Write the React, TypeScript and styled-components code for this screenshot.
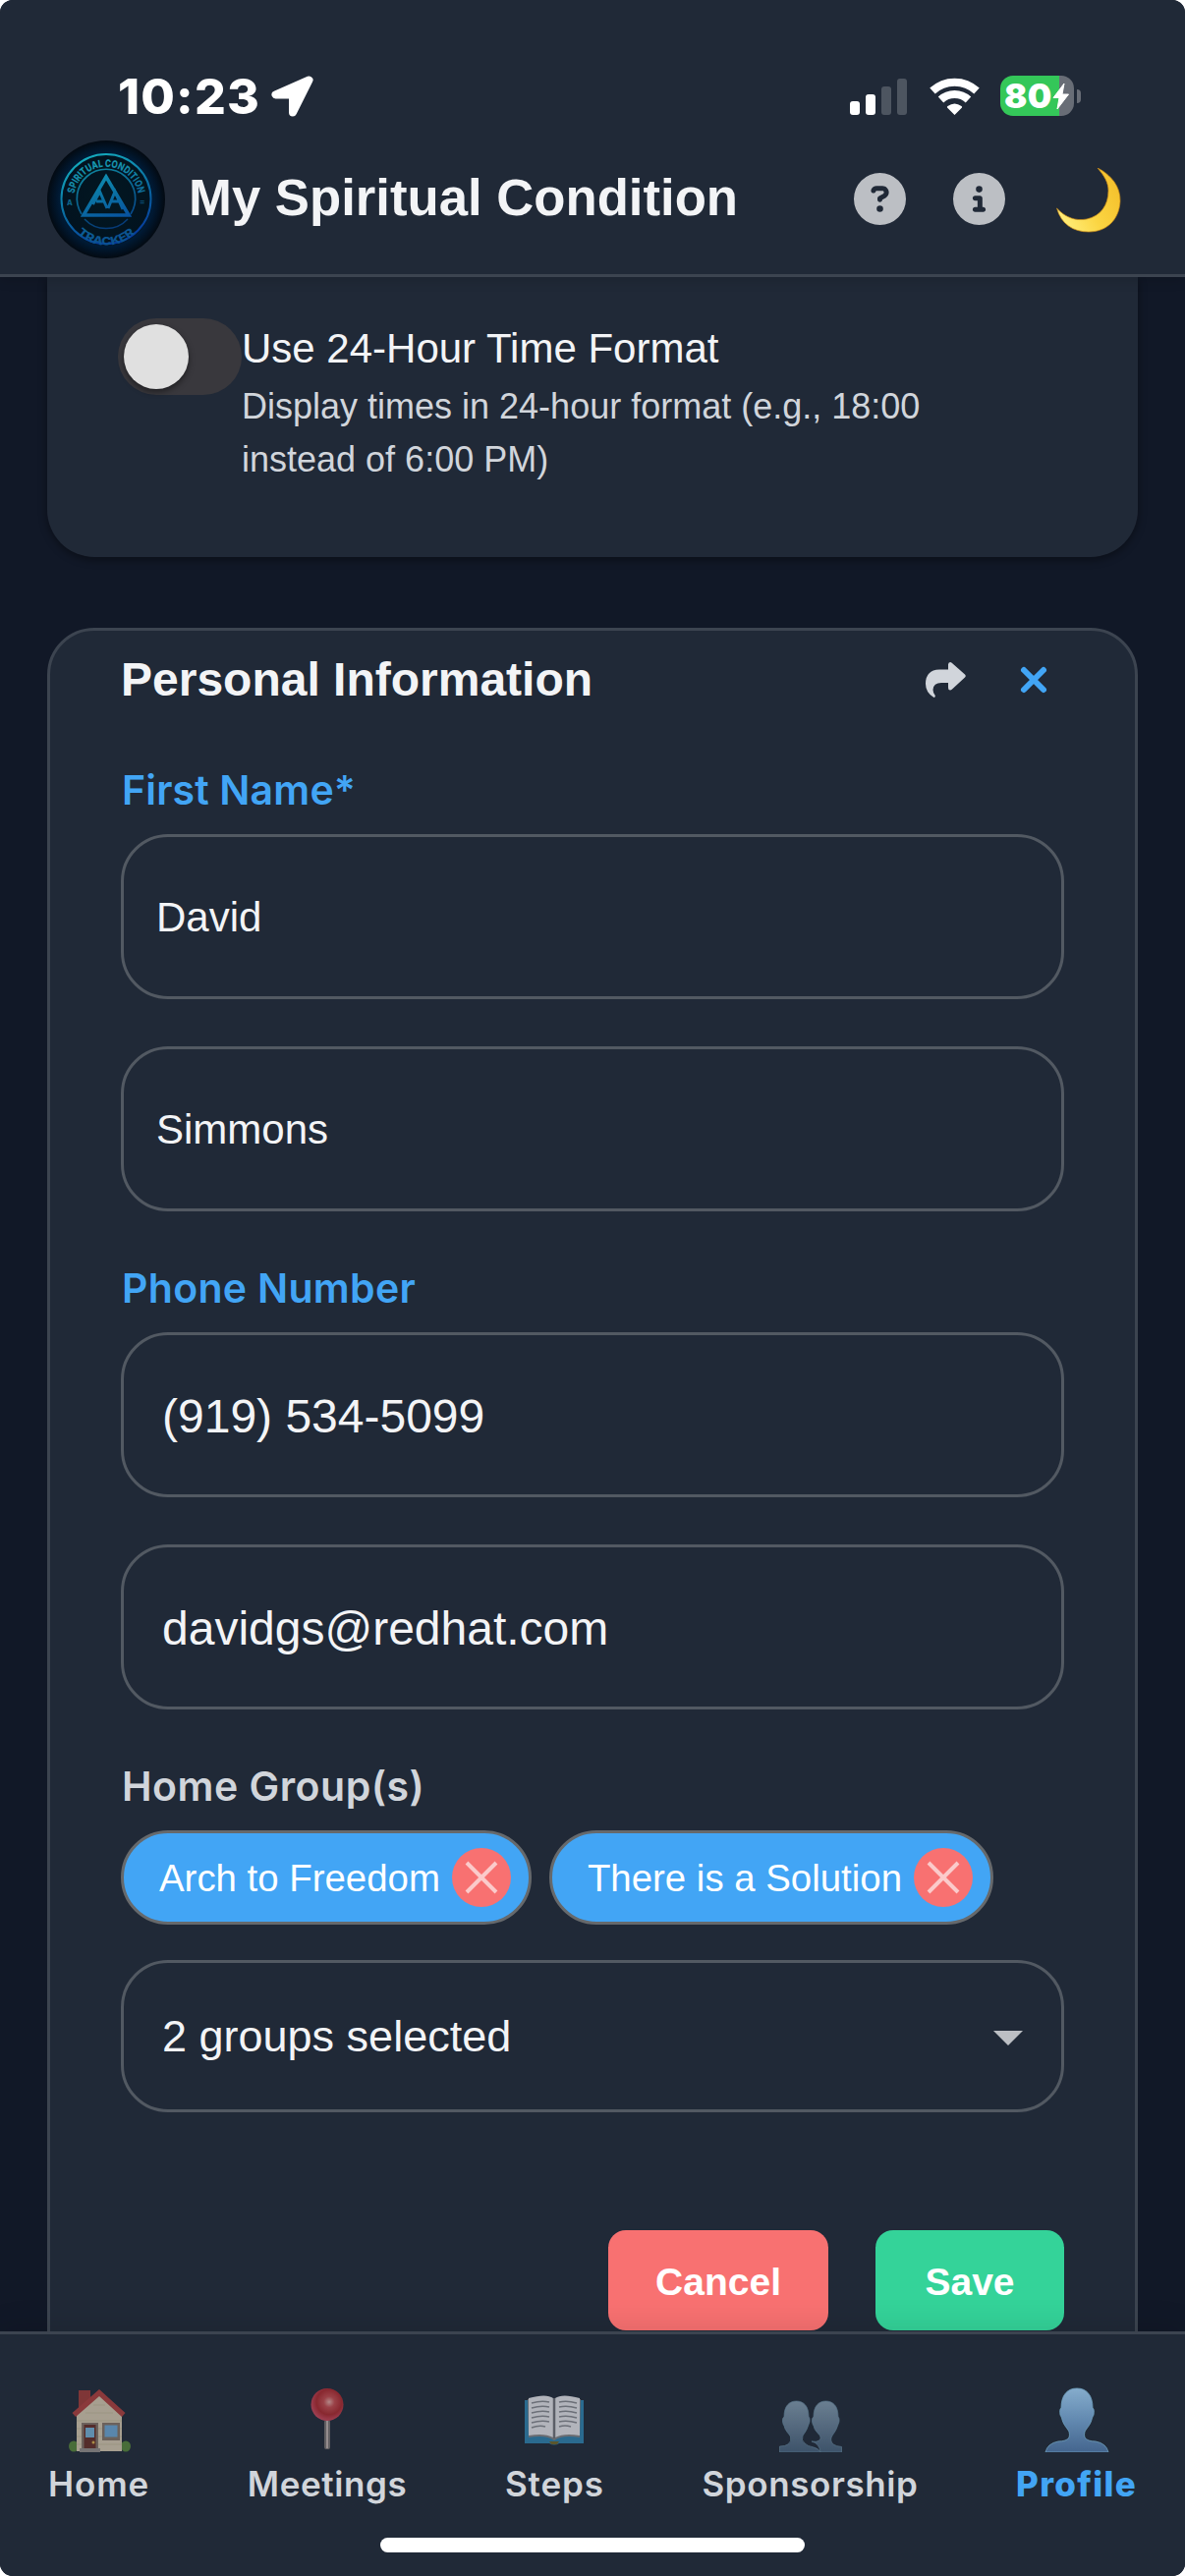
import React from "react";
import styled, { createGlobalStyle } from "styled-components";
import { FaCircleInfo, FaCircleQuestion } from "react-icons/fa6";

const helvetica = `"Liberation Sans", Arial, sans-serif`;
const system = `Inter, "Liberation Sans", sans-serif`;

const c = {
  page: "#111827",
  surface: "#202937",
  line: "#3c4450",
  field: "#525962",
  text: "#f3f4f6",
  muted: "#d1d5db",
  blue: "#42a5f5",
  red: "#f87171",
  green: "#34d399",
};

const GlobalStyle = createGlobalStyle`
  *, *::before, *::after { box-sizing: border-box; }
  body { margin: 0; background: #fff; font-family: ${helvetica}; }
  button, input { font-family: inherit; }
`;

const Screen = styled.div`
  display: flex;
  flex-direction: column;
  width: 1206px;
  height: 2622px;
  overflow: hidden;
  border-radius: 13px;
  background: ${c.page};
  color: ${c.text};
`;

const Header = styled.header`
  flex: none;
  z-index: 1;
  height: 282px;
  background: ${c.surface};
  border-bottom: 3px solid ${c.line};
  box-shadow: 0 3px 12px rgba(0, 0, 0, 0.14);
`;

const StatusBar = styled.div`
  display: flex;
  align-items: center;
  height: 127px;
  padding: 68px 106px 0 120px;
`;

const Clock = styled.span`
  width: 156px;
  font: 800 50px/60px ${system};
  letter-spacing: 1.2px;
  color: #fff;
  white-space: nowrap;
`;

const StatusIcons = styled.div`
  display: flex;
  align-items: center;
  margin-left: auto;
  gap: 21.5px;
`;

const Battery = styled.div`
  display: flex;
  align-items: center;
  gap: 3px;
`;

const BatteryBody = styled.div`
  display: flex;
  align-items: center;
  width: 75px;
  height: 41px;
  padding-left: 4px;
  border-radius: 13px;
  background: linear-gradient(90deg, #34c759 60px, #686d76 60px);
  font: 900 34.5px/41px ${system};
  letter-spacing: 0.3px;
  color: #fff;
`;

const BatteryCap = styled.div`
  width: 4px;
  height: 14px;
  border-radius: 0 4px 4px 0;
  background: #686d76;
`;

const TitleBar = styled.div`
  display: flex;
  align-items: center;
  height: 151px;
  padding: 0 65px 0 48px;
`;

const AppTitle = styled.h1`
  margin: 0 0 0 24px;
  padding-bottom: 3px;
  font-size: 52.7px;
  line-height: 64px;
  font-weight: 700;
  white-space: nowrap;
`;

const HeaderActions = styled.div`
  display: flex;
  align-items: center;
  gap: 48px;
  margin-left: auto;
  color: #bcbfc4;
  svg { display: block; }
`;

const PlainButton = styled.button`
  display: flex;
  padding: 0;
  border: 0;
  background: none;
  color: inherit;
`;

const ThemeButton = styled(PlainButton)`
  margin-left: 4px;
  padding-top: 2px;
`;

const Main = styled.main`
  flex: 1;
  min-height: 0;
  overflow: hidden;
  padding: 0 48px;
`;

const PreferenceCard = styled.section`
  display: flex;
  align-items: flex-start;
  height: 285px;
  padding: 41px 72px 0;
  border-radius: 0 0 48px 48px;
  background: ${c.surface};
  box-shadow: 0 3px 9px rgba(0, 0, 0, 0.4);
`;

const Toggle = styled.div`
  flex: none;
  width: 126px;
  height: 78px;
  margin-top: 1px;
  padding: 6px;
  border-radius: 39px;
  background: #39383d;
`;

const Thumb = styled.div`
  width: 66px;
  height: 66px;
  border-radius: 50%;
  background: #e0e0e0;
  box-shadow: 0 3px 6px rgba(0, 0, 0, 0.45);
`;

const PreferenceText = styled.div`
  max-width: 740px;
`;

const PreferenceName = styled.div`
  font-size: 42px;
  line-height: 64px;
`;

const PreferenceHint = styled.div`
  font-size: 36px;
  line-height: 54px;
  color: ${c.muted};
`;

const ProfileCard = styled.section`
  height: 1900px;
  margin-top: 72px;
  padding: 18px 72px 0;
  border: 3px solid ${c.line};
  border-radius: 48px;
  background: ${c.surface};
`;

const CardHeader = styled.div`
  display: flex;
  align-items: center;
  height: 64px;
  margin-bottom: 55px;
  padding-right: 18px;
`;

const CardTitle = styled.h2`
  margin: 0;
  font-size: 48px;
  line-height: 64px;
  font-weight: 700;
`;

const CardTools = styled.div`
  display: flex;
  align-items: center;
  gap: 56px;
  margin-left: auto;
`;

const Field = styled.div`
  display: flex;
  flex-direction: column;
  margin-bottom: 53px;
`;

const Label = styled.label<{ $tone?: string; $spacing: number }>`
  margin-bottom: 20px;
  padding-left: 1px;
  font: 600 41px/50px ${system};
  letter-spacing: ${(p) => p.$spacing}px;
  color: ${(p) => p.$tone ?? c.blue};
`;

const Input = styled.input<{ $large?: boolean }>`
  width: 100%;
  height: 168px;
  padding: 2px ${(p) => (p.$large ? 39 : 33)}px 0;
  border: 3px solid ${c.field};
  border-radius: 48px;
  outline: 0;
  background: transparent;
  font-size: ${(p) => (p.$large ? 48 : 42)}px;
  color: ${c.text};
  & + & { margin-top: 48px; }
`;

const Chips = styled.div`
  display: flex;
  gap: 18px;
  margin-bottom: 36px;
`;

const Chip = styled.span`
  display: flex;
  align-items: center;
  gap: 12px;
  height: 96px;
  padding: 0 18px 0 36px;
  border: 3px solid #66696c;
  border-radius: 48px;
  background: ${c.blue};
  font-size: 38.4px;
  color: #fff;
  white-space: nowrap;
`;

const ChipText = styled.span`
  padding-top: 2px;
`;

const ChipRemove = styled.button`
  display: grid;
  place-items: center;
  width: 60px;
  height: 60px;
  padding: 0;
  border: 0;
  border-radius: 50%;
  background: ${c.red};
`;

const Select = styled.div`
  display: flex;
  align-items: center;
  justify-content: space-between;
  height: 155px;
  padding: 0 39px;
  border: 3px solid ${c.field};
  border-radius: 48px;
  font-size: 45px;
`;

const CaretBox = styled.span`
  display: flex;
  padding-top: 4px;
`;

const Actions = styled.div`
  display: flex;
  justify-content: flex-end;
  gap: 48px;
  margin-top: 120px;
`;

const Action = styled.button<{ $fill: string }>`
  min-width: 192px;
  height: 102px;
  padding: 3px 48px 0;
  border: 0;
  border-radius: 18px;
  background: ${(p) => p.$fill};
  font-size: 39px;
  font-weight: 700;
  color: #fff;
`;

const BottomNav = styled.nav`
  flex: none;
  z-index: 1;
  height: 249px;
  padding: 54px 49px 0;
  border-top: 3px solid ${c.line};
  background: ${c.surface};
  box-shadow: 0 -3px 30px rgba(0, 0, 0, 0.12);
`;

const Tabs = styled.div`
  display: flex;
  justify-content: space-between;
`;

const Tab = styled.a<{ $active?: boolean; $spacing: number }>`
  display: flex;
  flex-direction: column;
  align-items: center;
  gap: 10px;
  font: ${(p) => (p.$active ? 800 : 600)} 35px/44px ${system};
  letter-spacing: ${(p) => p.$spacing}px;
  color: ${(p) => (p.$active ? c.blue : c.muted)};
  svg { opacity: ${(p) => (p.$active ? 1 : 0.7)}; }
`;

const HomeIndicator = styled.div`
  width: 432px;
  height: 15px;
  margin: 33px auto 0;
  border-radius: 8px;
  background: #fff;
`;

const LocationArrow = () => (
  <svg width="43" height="42" viewBox="0 0 43 42">
    <path d="M38.5 4.5 4.5 19.5h17.500V37.500Z" fill="#fff" stroke="#fff" strokeWidth="8" strokeLinejoin="round" />
  </svg>
);

const Signal = () => (
  <svg width="59" height="38" viewBox="0 0 59 38">
    <rect x="0" y="24" width="10" height="14" rx="3" fill="#fff" />
    <rect x="16" y="17" width="10" height="21" rx="3" fill="#fff" />
    <rect x="32" y="9" width="10" height="29" rx="3" fill="#4d5560" />
    <rect x="48" y="1" width="10" height="37" rx="3" fill="#4d5560" />
  </svg>
);

const Wifi = () => (
  <svg width="51" height="38" viewBox="0 0 51 38">
    <g fill="none" stroke="#fff" strokeWidth="8">
      <path d="M3 13.500A33 33 0 0 1 48 13.500" />
      <path d="M11.500 22.500A20.500 20.500 0 0 1 39.500 22.500" />
    </g>
    <path d="M25.500 38 18 30.500Q17.500 29.500 18.500 29Q25.500 24 32.500 29Q33.500 29.500 33 30.500Z" fill="#fff" />
  </svg>
);

const Bolt = () => (
  <svg width="17" height="28" viewBox="0 0 17 28">
    <path d="M12 1 1 15.500h6L5 27 16.500 12H10Z" fill="#fff" stroke="#fff" strokeWidth="1" strokeLinejoin="round" />
  </svg>
);

const Logo = () => (
  <svg width="120" height="120" viewBox="0 0 120 120">
    <defs>
      <radialGradient id="disc">
        <stop offset="0" stopColor="#021722" />
        <stop offset=".72" stopColor="#02131f" />
        <stop offset=".8" stopColor="#001a35" />
        <stop offset="1" stopColor="#030a12" />
      </radialGradient>
      <linearGradient id="neon" gradientUnits="userSpaceOnUse" x1="40" y1="12" x2="75" y2="105">
        <stop offset="0" stopColor="#15b0c0" />
        <stop offset=".5" stopColor="#0a6fa2" />
        <stop offset="1" stopColor="#06379c" />
      </linearGradient>
      <linearGradient id="letters" gradientUnits="userSpaceOnUse" x1="45" y1="18" x2="70" y2="100">
        <stop offset="0" stopColor="#18a2b4" />
        <stop offset=".5" stopColor="#0f6f9c" />
        <stop offset="1" stopColor="#0b5290" />
      </linearGradient>
      <path id="topArc" d="M27.500 64A32.800 32.800 0 1 1 92.500 64" />
      <path id="bottomArc" d="M18.500 65A41.500 41.500 0 0 0 101.500 65" />
    </defs>
    <circle cx="60" cy="60" r="60" fill="url(#disc)" />
    <g fill="none" stroke="url(#neon)">
      <circle cx="60" cy="59.500" r="45.500" strokeWidth="2" />
      <path d="M35 75A29.700 29.700 0 1 1 85 75" strokeWidth="1.700" opacity=".85" />
      <path d="M38 80A30 30 0 0 0 82 80" strokeWidth="1.500" opacity=".7" />
      <path d="M60 37 37 76h46Z" strokeWidth="3.600" />
      <path d="M46.500 65 53.500 52 61 69M50 62h8M62 69 69 52 77 70M66 62h7" strokeWidth="3" />
    </g>
    <g fill="url(#letters)" fontFamily={system} fontWeight="800">
      <text fontSize="10.500" textAnchor="middle">
        <textPath href="#topArc" startOffset="50%" textLength="92" lengthAdjust="spacingAndGlyphs">SPIRITUAL CONDITION</textPath>
      </text>
      <text fontSize="11.500" textAnchor="middle">
        <textPath href="#bottomArc" startOffset="50%" textLength="65" lengthAdjust="spacingAndGlyphs">TRACKER</textPath>
      </text>
      <text x="20" y="65.500" fontSize="7.500" opacity=".8">A</text>
      <text x="94" y="65" fontSize="8" opacity=".6">=</text>
    </g>
  </svg>
);

const Moon = () => (
  <svg width="66" height="66" viewBox="0 0 66 66">
    <defs>
      <linearGradient id="moon" x1="0" y1=".8" x2="1" y2=".3">
        <stop offset="0" stopColor="#fff080" />
        <stop offset=".5" stopColor="#fbd542" />
        <stop offset="1" stopColor="#f5c02c" />
      </linearGradient>
    </defs>
    <path d="M42 0C56 7 65.500 19 65 34C64 53 51 65 33 65C17 65 5 57 .5 41C10 51 20 54 31 52C45 49 53 38 53 23C53 15 49 8 42 0Z" fill="url(#moon)" stroke="#c98a19" strokeWidth=".7" />
  </svg>
);

const Share = () => (
  <svg width="41" height="36" viewBox="0 0 41 36">
    <path d="M23 2.500Q23 0 25 0Q26 0 27 1L40 12.500Q41.500 14 40 15.500L27 27.500Q26 28.500 25 28.500Q23 28.500 23 26V21H16Q8 21 7.500 28Q7.500 31 9.500 33.500Q10.500 35.500 8.500 36Q0 31 0 22Q0 8 14 7.500H23Z" fill={c.muted} />
  </svg>
);

const Cross = ({ size, width, color, cap = "butt" }: { size: number; width: number; color: string; cap?: "butt" | "round" }) => (
  <svg width={size} height={size} viewBox={`0 0 ${size} ${size}`} overflow="visible">
    <path
      d={`M${width / 2} ${width / 2}L${size - width / 2} ${size - width / 2}M${size - width / 2} ${width / 2}L${width / 2} ${size - width / 2}`}
      stroke={color}
      strokeWidth={width}
      strokeLinecap={cap}
    />
  </svg>
);

const Caret = () => (
  <CaretBox>
    <svg width="30" height="15" viewBox="0 0 30 15">
      <path d="M0 0h30L15 15Z" fill="#bcbfc4" />
    </svg>
  </CaretBox>
);

const House = () => (
  <svg width="64" height="66" viewBox="0 0 64 66">
    <rect x="11" y="3" width="12" height="20" fill="#a83c38" />
    <ellipse cx="6" cy="60" rx="5" ry="5.500" fill="#5a8a3a" />
    <ellipse cx="59" cy="60" rx="5" ry="5.500" fill="#5a8a3a" />
    <path d="M9 28 32 7 55 28V65H9Z" fill="#e0d2b6" />
    <path d="M9 34h46M9 42h46M9 50h46M9 58h46M18 26h28M26 18h12" stroke="#cdbf9f" strokeWidth=".8" />
    <path d="M32 2 4.500 26l3.500 4L32 9 55 30l3.500-4Z" fill="#b8403d" />
    <rect x="14" y="36" width="17" height="28" fill="#8b7a6b" />
    <rect x="16.500" y="38" width="12" height="25" fill="#6b2f26" />
    <rect x="18" y="41" width="9" height="10" fill="#7cb9e0" />
    <circle cx="26" cy="56" r="1.500" fill="#e5b84d" />
    <rect x="35" y="36" width="18" height="18" fill="#8b7a6b" />
    <rect x="37.500" y="38.500" width="13" height="12" fill="#72aede" />
    <rect x="12" y="62" width="21" height="4" fill="#9b9590" />
  </svg>
);

const Pin = () => (
  <svg width="64" height="66" viewBox="0 0 64 66">
    <defs>
      <radialGradient id="pinHead" cx=".56" cy=".42" r=".6">
        <stop offset="0" stopColor="#f2b0aa" />
        <stop offset=".28" stopColor="#cf4d50" />
        <stop offset=".65" stopColor="#b5282d" />
        <stop offset="1" stopColor="#d94c63" />
      </radialGradient>
    </defs>
    <rect x="29" y="33" width="6" height="30" rx="2" fill="#7d7775" />
    <path d="M32 34v28" stroke="#c6b7b3" strokeWidth="2" />
    <circle cx="32" cy="17.500" r="16.500" fill="url(#pinHead)" />
  </svg>
);

const Book = () => (
  <svg width="64" height="66" viewBox="0 0 64 66">
    <path d="M2 13H62V57H37Q32 60 27 57H2Z" fill="#2f86b5" />
    <path d="M5 12 6 51Q24 48 32 54Q40 48 58 51L59 12Z" fill="#8a8a8c" />
    <path d="M6 11Q24 6 31 11V51Q22 46 6 49ZM58 11Q40 6 33 11V51Q42 46 58 49Z" fill="#f0f0f4" />
    <path d="M32 11V52" stroke="#76777c" strokeWidth="2.500" />
    <path d="M9 16q10-3 18-1M9 21q10-3 18-1M9 26q10-3 18-1M9 31q10-3 18-1M9 36q10-3 18-1M9 41q8-3 14-1M37 15q8-2 18 1M37 20q8-2 18 1M37 25q8-2 18 1M37 30q8-2 18 1M37 35q8-2 18 1M37 40q6-2 12 0" fill="none" stroke="#8d8e94" strokeWidth="1.500" />
    <path d="M27 55h10l-2 3h-6Z" fill="#756a2a" />
  </svg>
);

const Person = () => (
  <svg width="66" height="66" viewBox="0 0 66 66">
    <defs>
      <linearGradient id="person" x1="0" y1="0" x2="0" y2="1">
        <stop offset="0" stopColor="#85accc" />
        <stop offset=".5" stopColor="#6289b0" />
        <stop offset="1" stopColor="#44658e" />
      </linearGradient>
    </defs>
    <path d="M33 1C43 1 49 8 49 21Q51 22 50 28Q49 30 48.500 31C47 38 44 40 41 45Q39 52 45 54Q48 55 52 55Q63 57 65 66H1Q3 57 14 55Q18 55 21 54Q27 52 25 45C22 40 19 38 17.500 31Q17 30 16 28Q15 22 17 21C17 8 23 1 33 1Z" fill="url(#person)" stroke="#6fa0bd" strokeWidth=".8" />
  </svg>
);

const People = () => (
  <svg width="64" height="66" viewBox="0 0 64 66">
    <defs>
      <linearGradient id="people" gradientUnits="userSpaceOnUse" x1="0" y1="14" x2="0" y2="66">
        <stop offset="0" stopColor="#8aa4b8" />
        <stop offset=".5" stopColor="#6b849c" />
        <stop offset="1" stopColor="#4a6580" />
      </linearGradient>
    </defs>
    <g fill="url(#people)" stroke="#6f93aa" strokeWidth=".7">
      <path d="M47.500 14C55 14 60 19 60 30Q61.500 31 61 35Q60 38 59.500 39C58 44 56 46 54 49Q51 54 55 58Q58 60 63.500 60.500V66H42Q41 57 33 55Q38 56 41 54Q43 52 41.500 49C39 46 36 44 35 39Q34 38 33.500 35Q33 31 35 30C35 19 40 14 47.500 14Z" />
      <path d="M17.500 14C25 14 30 19 30 30Q31.500 31 31 35Q30 38 29.500 39C28 44 26 46 24 49Q22 54 26 57Q29 60 35 61Q40 62 42 66H.5V60Q6 60 9 58Q13 55 11.500 50C9 46 6 44 5 39Q4 38 3.500 35Q3 31 5 30C5 19 10 14 17.500 14Z" />
    </g>
  </svg>
);

const tabs = [
  { name: "Home", Icon: House, spacing: 0.9 },
  { name: "Meetings", Icon: Pin, spacing: 0.6 },
  { name: "Steps", Icon: Book, spacing: 0.9 },
  { name: "Sponsorship", Icon: People, spacing: 0.6 },
  { name: "Profile", Icon: Person, spacing: 1.3, active: true },
];

export default function App() {
  return (
    <>
      <GlobalStyle />
      <Screen>
        <Header>
          <StatusBar>
            <Clock>10:23</Clock>
            <LocationArrow />
            <StatusIcons>
              <Signal />
              <Wifi />
              <Battery>
                <BatteryBody>80<Bolt /></BatteryBody>
                <BatteryCap />
              </Battery>
            </StatusIcons>
          </StatusBar>
          <TitleBar>
            <Logo />
            <AppTitle>My Spiritual Condition</AppTitle>
            <HeaderActions>
              <PlainButton aria-label="Help"><FaCircleQuestion size={53} /></PlainButton>
              <PlainButton aria-label="About"><FaCircleInfo size={53} /></PlainButton>
              <ThemeButton aria-label="Theme"><Moon /></ThemeButton>
            </HeaderActions>
          </TitleBar>
        </Header>

        <Main>
          <PreferenceCard>
            <Toggle><Thumb /></Toggle>
            <PreferenceText>
              <PreferenceName>Use 24-Hour Time Format</PreferenceName>
              <PreferenceHint>Display times in 24-hour format (e.g., 18:00 instead of 6:00 PM)</PreferenceHint>
            </PreferenceText>
          </PreferenceCard>

          <ProfileCard>
            <CardHeader>
              <CardTitle>Personal Information</CardTitle>
              <CardTools>
                <PlainButton aria-label="Share"><Share /></PlainButton>
                <PlainButton aria-label="Close"><Cross size={26} width={6} color={c.blue} cap="round" /></PlainButton>
              </CardTools>
            </CardHeader>

            <Field>
              <Label $spacing={0.15}>First Name*</Label>
              <Input defaultValue="David" />
              <Input defaultValue="Simmons" />
            </Field>
            <Field>
              <Label $spacing={0.3}>Phone Number</Label>
              <Input $large defaultValue="(919) 534-5099" />
              <Input $large defaultValue="davidgs@redhat.com" />
            </Field>
            <Field>
              <Label $tone={c.muted} $spacing={0.5}>Home Group(s)</Label>
              <Chips>
                {["Arch to Freedom", "There is a Solution"].map((group) => (
                  <Chip key={group}>
                    <ChipText>{group}</ChipText>
                    <ChipRemove aria-label="Remove"><Cross size={34} width={4} color="#fbcaca" /></ChipRemove>
                  </Chip>
                ))}
              </Chips>
              <Select>2 groups selected<Caret /></Select>
              <Actions>
                <Action $fill={c.red}>Cancel</Action>
                <Action $fill={c.green}>Save</Action>
              </Actions>
            </Field>
          </ProfileCard>
        </Main>

        <BottomNav>
          <Tabs>
            {tabs.map(({ name, Icon, spacing, active }) => (
              <Tab key={name} $active={active} $spacing={spacing}>
                <Icon />
                {name}
              </Tab>
            ))}
          </Tabs>
          <HomeIndicator />
        </BottomNav>
      </Screen>
    </>
  );
}
